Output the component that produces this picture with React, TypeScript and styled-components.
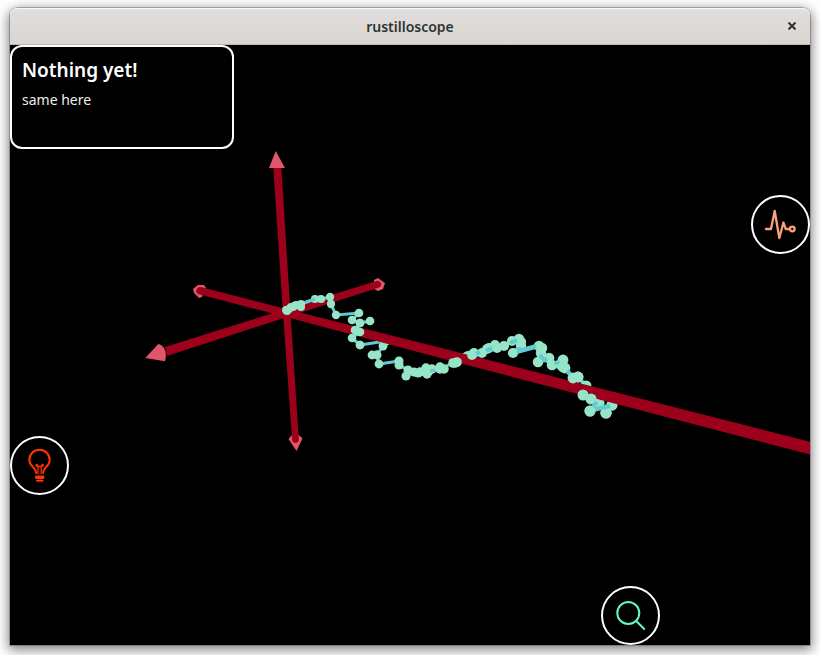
import React from "react";
import styled, { createGlobalStyle, css } from "styled-components";

const GlobalStyle = createGlobalStyle`
  * { box-sizing: border-box; }
  body {
    margin: 0;
    background: #fff;
    font-family: "Noto Sans", "Open Sans", sans-serif;
  }
`;

const Desktop = styled.div`
  display: flex;
  min-height: 100vh;
  padding: 8px 10px 10px;
  overflow: hidden;
`;

const AppWindow = styled.main`
  flex: 1;
  display: flex;
  flex-direction: column;
  border-radius: 8px 8px 0 0;
  box-shadow: 0 0 0 1px rgba(0, 0, 0, 0.23), 0 3px 12px 2px rgba(0, 0, 0, 0.48);
`;

const TitleBar = styled.header`
  display: grid;
  grid-template-columns: 36px 1fr 36px;
  align-items: center;
  height: 37px;
  border-bottom: 1px solid #bfb8b1;
  border-radius: 8px 8px 0 0;
  background: linear-gradient(#e1dedb, #dad6d2);
  box-shadow: inset 0 1px #f9f8f8;
`;

const Title = styled.h1`
  grid-column: 2;
  margin: 0;
  padding-top: 2px;
  color: #2e3436;
  font-size: 14px;
  line-height: 20px;
  font-weight: 600;
  text-align: center;
`;

const CloseButton = styled.button`
  display: grid;
  place-items: center;
  height: 36px;
  padding: 0;
  border: 0;
  background: none;
`;

const Viewport = styled.section`
  position: relative;
  flex: 1;
  overflow: hidden;
  background: #000;
`;

const Scene = styled.svg`
  position: absolute;
  inset: 0;
  width: 100%;
  height: 100%;
`;

const InfoCard = styled.article`
  position: relative;
  width: 224px;
  height: 104px;
  padding: 10px;
  border: 2px solid #fff;
  border-radius: 12px;
  background: #000;
  color: #fff;
`;

const CardTitle = styled.h2`
  margin: 0;
  font-size: 19px;
  line-height: 26px;
  font-weight: 600;
`;

const CardText = styled.p`
  margin: 5px 0 0;
  color: #eee;
  font-size: 14px;
  line-height: 24px;
`;

type Dock = "right" | "left" | "bottom";

const docks = {
  right: css`
    top: 25%;
    right: 0;
  `,
  left: css`
    bottom: 25%;
    left: 0;
  `,
  bottom: css`
    right: 150px;
    bottom: 0;
  `,
};

const RoundButton = styled.button<{ $dock: Dock; $color: string }>`
  position: absolute;
  ${(p) => docks[p.$dock]}
  display: grid;
  place-items: center;
  width: 59px;
  height: 59px;
  padding: 0;
  border: 2px solid #fff;
  border-radius: 50%;
  background: #000;
  color: ${(p) => p.$color};
`;

const Icon = styled.svg`
  width: 33px;
  height: 33px;
  fill: none;
  stroke: currentColor;
  stroke-width: 2;
  stroke-linecap: round;
  stroke-linejoin: round;
  overflow: visible;
`;

type Point = [number, number];

// Samples in front of the long axis, each run joined by its own line.
const frontRuns: Point[][] = [
  [
    [286, 310], [287, 311], [289, 309], [291, 307], [294, 306], [296, 305],
    [301, 304], [301, 307], [293, 307], [315, 299], [321, 299], [330, 297], [331, 304],
    [336, 315], [359, 313], [352, 320], [360, 323], [370, 321],
  ],
  [[360, 323], [355, 330], [357, 331], [360, 332], [352, 338], [360, 345]],
  [
    [372, 355], [377, 355], [379, 364], [399, 361], [399, 365], [408, 370],
    [406, 376], [414, 372], [418, 373], [420, 372], [427, 374], [426, 368],
    [432, 369], [429, 371], [440, 367], [444, 369], [440, 369], [453, 363],
    [455, 363], [457, 362],
  ],
  [
    [472, 355], [474, 353], [482, 353], [487, 349], [489, 348], [495, 345],
    [497, 348], [504, 346], [512, 341], [519, 339], [521, 342], [521, 346],
    [513, 353], [539, 346], [542, 348], [541, 353], [538, 362], [549, 358],
    [552, 365], [563, 360], [561, 365], [563, 367], [565, 368], [573, 378],
    [578, 377],
  ],
  [[583, 395], [591, 399]],
  [[590, 411]],
  [[606, 413]],
];

// Samples the long axis partly hides.
const backRuns: Point[][] = [
  [[360, 345], [386, 341], [383, 346], [377, 355]],
  [[457, 362], [466, 357], [468, 356], [472, 355]],
  [[578, 377], [586, 386]],
  [[599, 403], [590, 411], [612, 405], [606, 413]],
];

// Short stretches of line that run over the nearest samples.
const overlaps: Point[][] = [
  [[315, 299], [306, 302]],
  [[476, 354], [480, 352]],
  [[486, 351], [492, 348]],
  [[510, 343], [517, 340]],
  [[519, 347], [519, 351], [536, 346]],
  [[540, 355], [544, 360]],
  [[543, 361], [547, 359]],
  [[555, 364], [559, 361]],
  [[567, 371], [570, 374]],
  [[430, 371], [435, 370]],
  [[593, 407], [597, 402]],
  [[596, 409], [610, 406]],
];

const radiusAt = (x: number) => 4 + Math.max(0, x - 300) / 190;

const toPath = (run: Point[]) => run.map(([x, y]) => `${x},${y}`).join(" ");

function Line({ run }: { run: Point[] }) {
  return <polyline points={toPath(run)} fill="none" stroke="#5fcbd2" strokeWidth={run[0][0] > 465 ? 4 : 3} />;
}

function Trace({ runs }: { runs: Point[][] }) {
  return (
    <>
      {runs.map((run, i) => (
        <React.Fragment key={i}>
          <Line run={run} />
          {run.map(([x, y], j) => (
            <circle key={j} cx={x} cy={y} r={radiusAt(x)} fill="#96e5c7" />
          ))}
        </React.Fragment>
      ))}
    </>
  );
}

function AxisScene() {
  return (
    <Scene viewBox="10 45 800 600" preserveAspectRatio="xMidYMid slice" role="img" aria-label="Signal trace on three axes">
      <g fill="#e0566b">
        <path d="M193 289l5-4h6l2 3-4 9-3 1-5-5z" />
        <path d="M374 280l4-2 7 5-2 6-5 2-4-2z" />
        <path d="M288.500 439l3-3.500h8l3 3-6 12.500z" />
      </g>
      <g fill="#9d001b">
        <path d="M273.300 167h8l9.200 146 8.300 126a3.200 3.200 0 0 1-6.600 1L283 313z" />
        <path d="M165 347L286 309l90.500-28a3.400 3.400 0 0 1 2 6.700L287 317 167 356z" />
      </g>
      <Trace runs={backRuns} />
      <path d="M201 287l85 22 164 41.300 360 91.400v12.700L450 360.500 286 317 199 294.200a3.500 3.500 0 0 1 2-7z" fill="#9d001b" />
      <g fill="#e0566b">
        <path d="M275.700 151L285 168h-16z" />
        <path d="M145.300 358l13-14c5 1 9.500 7 6.700 17.200z" />
      </g>
      <Trace runs={frontRuns} />
      {overlaps.map((run, i) => (
        <Line key={i} run={run} />
      ))}
    </Scene>
  );
}

export default function App() {
  return (
    <>
      <GlobalStyle />
      <Desktop>
        <AppWindow>
          <TitleBar>
            <Title>rustilloscope</Title>
            <CloseButton aria-label="Close">
              <svg width="8" height="8" viewBox="0 0 8 8" stroke="#2e3436" strokeWidth="2">
                <path d="M.5.5l7 7M7.5.5l-7 7" />
              </svg>
            </CloseButton>
          </TitleBar>
          <Viewport>
            <AxisScene />
            <InfoCard>
              <CardTitle>Nothing yet!</CardTitle>
              <CardText>same here</CardText>
            </InfoCard>
            <RoundButton $dock="right" $color="#ff9e79" aria-label="Signal">
              <Icon viewBox="0 0 33 33" strokeWidth="2">
                <g strokeWidth="2.3">
                  <path d="M2 21h5l3.700-18 4.600 27 4.200-15.500 2.200 6.500h4" />
                  <circle cx="28.300" cy="21" r="2.300" />
                </g>
              </Icon>
            </RoundButton>
            <RoundButton $dock="left" $color="#ff3300" aria-label="Hints">
              <Icon viewBox="0 0 33 33">
                <path d="M13 24v-1c0-4.500-6.700-5.500-6.700-12a10.200 10.200 0 0 1 20.400 0c0 6.500-6.500 7.500-6.500 12v1" />
                <path d="M13 27.500h7.500M13 29h7.500M14 31.700h5.500" />
                <g strokeWidth="1.3">
                  <path d="M15 24.500v-7.500M18.200 24.500v-7.500M14 17.300h5.200" />
                  <circle cx="13.700" cy="16.200" r=".7" />
                  <circle cx="19.500" cy="16.200" r=".7" />
                </g>
              </Icon>
            </RoundButton>
            <RoundButton $dock="bottom" $color="#66f5c4" aria-label="Search">
              <Icon viewBox="0 0 33 33">
                <circle cx="14.300" cy="14" r="11" />
                <path d="M22.200 22l8 8" />
              </Icon>
            </RoundButton>
          </Viewport>
        </AppWindow>
      </Desktop>
    </>
  );
}
